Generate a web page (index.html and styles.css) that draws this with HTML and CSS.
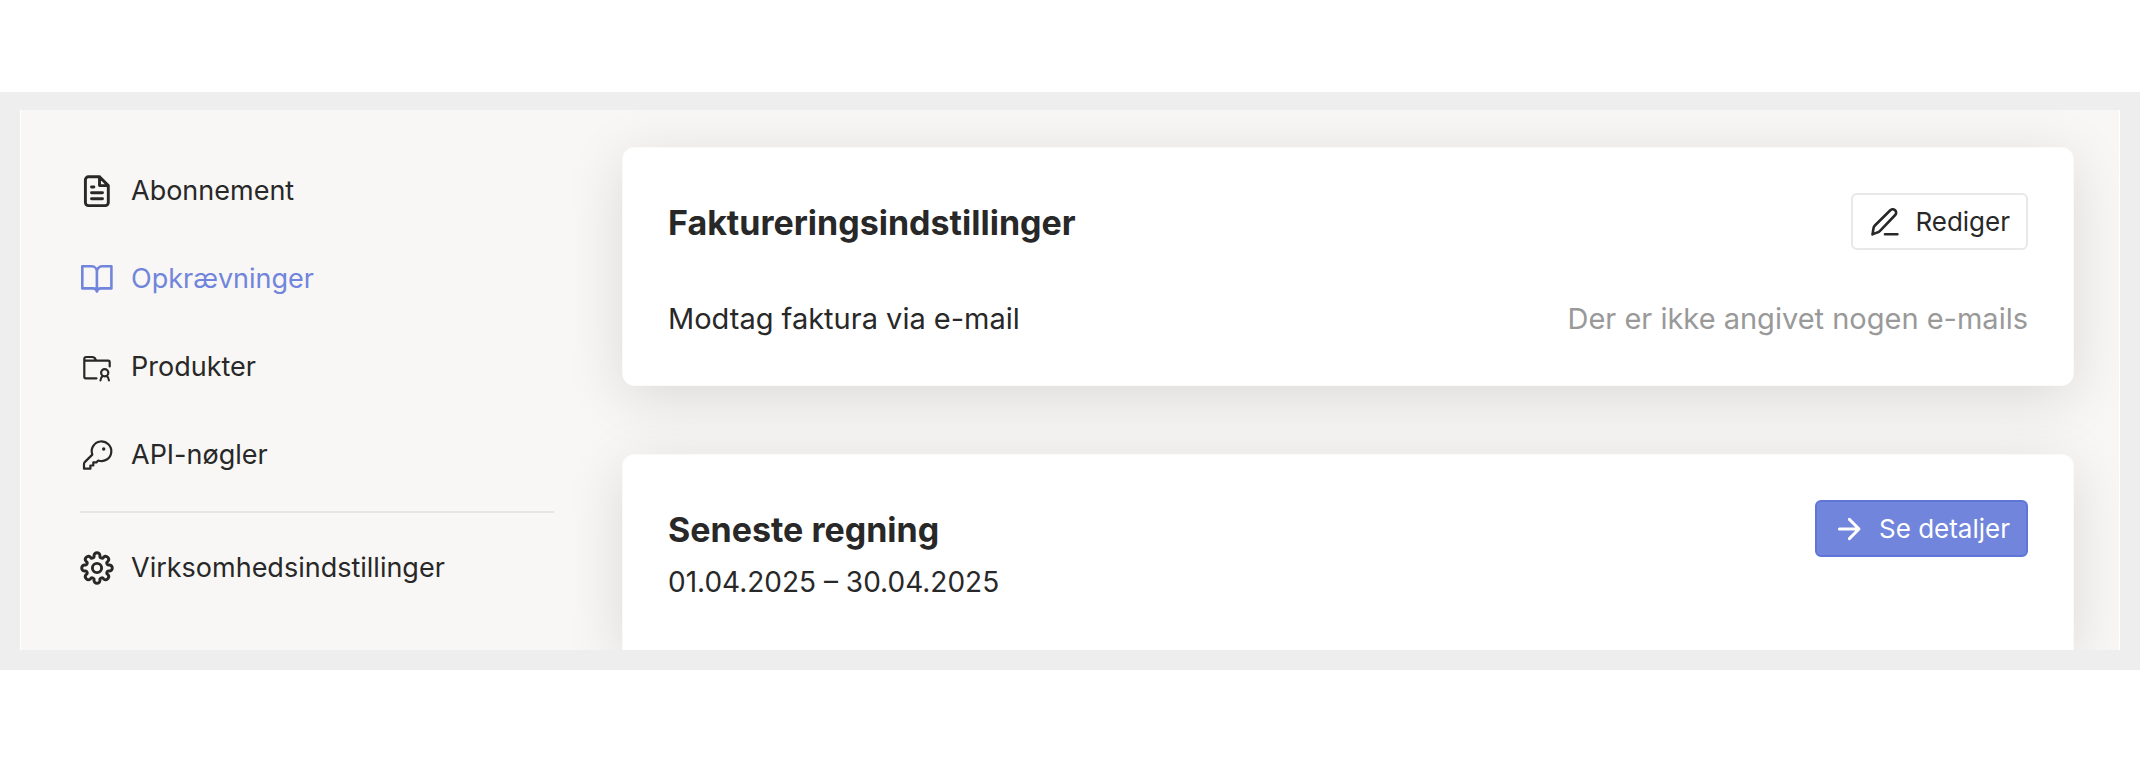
FILE: index.html
```
<!DOCTYPE html>
<html lang="da">

<head>
    <meta charset="UTF-8">
    <meta name="viewport" content="width=device-width, initial-scale=1.0">
    <title>Opkrævninger</title>
    <link rel="stylesheet" href="styles.css">
</head>

<body>
    <div class="frame">
        <div class="panel">
            <nav class="sidebar">
                <ul class="menu">
                    <li>
                        <a class="menu-link" href="#abonnement">
                            <svg class="icon bold" viewBox="0 0 34 34" aria-hidden="true">
                                <path d="M19.5 2.8H8.4a3 3 0 0 0-3 3v22.8a3 3 0 0 0 3 3h16.9a3 3 0 0 0 3-3V11.6zM19.5 2.8v8.8h8.8M11.5 13h2.4M11.5 18.7h11M11.5 24.7h11" />
                            </svg>
                            Abonnement
                        </a>
                    </li>
                    <li>
                        <a class="menu-link active" href="#opkraevninger" aria-current="page">
                            <svg class="icon" viewBox="0 0 34 34" aria-hidden="true">
                                <path d="M16.9 9.5a5.2 5.2 0 0 0-5.2-5.2H2.3v22.1h10.6a4 4 0 0 1 4 3.2a4 4 0 0 1 4-3.2h10.5V4.3h-9.3a5.2 5.2 0 0 0-5.2 5.2zV29" />
                            </svg>
                            Opkrævninger
                        </a>
                    </li>
                    <li>
                        <a class="menu-link" href="#produkter">
                            <svg class="icon thin" viewBox="0 0 34 34" aria-hidden="true">
                                <path d="M16.5 28.3H5.8a1.5 1.5 0 0 1-1.5-1.5V9a2 2 0 0 1 2-2h5.8a3.6 3.6 0 0 1 3.4 2.2l.7 1.5h12a1.5 1.5 0 0 1 1.5 1.5v4.2M4.3 10.7h12" />
                                <circle cx="24.7" cy="22.8" r="3.6" />
                                <path d="M22.6 26.2a5 5 0 0 0-2.1 4.2M26.8 26.2a5 5 0 0 1 2.1 4.2" />
                            </svg>
                            Produkter
                        </a>
                    </li>
                    <li>
                        <a class="menu-link" href="#api">
                            <svg class="icon thin" viewBox="0 0 34 34" aria-hidden="true">
                                <path d="M12.3 16.6L5 23.9a3 3 0 0 0-1 2.1v4.7h6.4v-3.2h2.9v-3.1h3.1l1.9-1.9a9.8 9.8 0 1 0-6-5.9z" />
                                <circle class="dot" cx="23.7" cy="11" r="1.7" />
                            </svg>
                            API-nøgler
                        </a>
                    </li>
                </ul>
                <hr class="divider">
                <a class="menu-link" href="#virksomhed">
                    <svg class="icon bold" viewBox="-17 -17 34 34" aria-hidden="true">
                        <path d="M-3-12.3A3 3 0 0 1 3-12.3A1.95 1.95 0 0 0 6.58-10.82A3 3 0 0 1 10.82-6.58A1.95 1.95 0 0 0 12.3-3A3 3 0 0 1 12.3 3A1.95 1.95 0 0 0 10.82 6.58A3 3 0 0 1 6.58 10.82A1.95 1.95 0 0 0 3 12.3A3 3 0 0 1-3 12.3A1.95 1.95 0 0 0-6.58 10.82A3 3 0 0 1-10.82 6.58A1.95 1.95 0 0 0-12.3 3A3 3 0 0 1-12.3-3A1.95 1.95 0 0 0-10.82-6.58A3 3 0 0 1-6.58-10.82A1.95 1.95 0 0 0-3-12.3z" />
                        <circle cx="0" cy="0" r="4.6" />
                    </svg>
                    Virksomhedsindstillinger
                </a>
            </nav>

            <main class="content">
                <section class="card">
                    <div class="card-header">
                        <h2>Faktureringsindstillinger</h2>
                        <button type="button" class="btn">
                            <svg class="btn-icon" viewBox="0 0 28 28" aria-hidden="true">
                                <path d="M1.5 26.4l1-6.2a5 5 0 0 1 1.4-2.7L19.3 2.3a3.3 3.3 0 0 1 4.9 4.7L9 22.9a5 5 0 0 1-2.6 1.5zM14 26.3h12.4" />
                            </svg>
                            Rediger
                        </button>
                    </div>
                    <div class="card-row">
                        <span>Modtag faktura via e-mail</span>
                        <span class="muted">Der er ikke angivet nogen e-mails</span>
                    </div>
                </section>

                <section class="card card-last">
                    <div class="card-header">
                        <div>
                            <h2>Seneste regning</h2>
                            <p class="period">01.04.2025 – 30.04.2025</p>
                        </div>
                        <button type="button" class="btn btn-primary">
                            <svg class="btn-icon" viewBox="0 0 28 28" aria-hidden="true">
                                <path d="M4.4 14h19.4M14.4 4.4L24 14l-9.6 9.6" />
                            </svg>
                            Se detaljer
                        </button>
                    </div>
                </section>
            </main>
        </div>
    </div>
</body>

</html>
```
FILE: styles.css
```
* {
    box-sizing: border-box;
}

body {
    margin: 0;
    padding: 92px 0 90px;
    background-color: #fff;
    color: #282828;
    font-family: Inter, "Liberation Sans", sans-serif;
    font-size: 28px;
}

.frame {
    padding: 18px 20px 20px;
    background-color: #eee;
}

.panel {
    display: grid;
    grid-template-columns: 474px 1fr;
    gap: 68px;
    padding: 37px 45px 0 59px;
    border: solid #fff;
    border-width: 0 1px;
    background-color: #f8f7f5;
    overflow: hidden;
}

/* Sidebar */
.sidebar {
    padding-top: 24px;
}

.menu {
    display: flex;
    flex-direction: column;
    gap: 48px;
    margin: 0;
    padding: 0;
    list-style: none;
}

.menu-link {
    display: flex;
    align-items: center;
    gap: 17px;
    color: #282828;
    font-size: 27px;
    line-height: 40px;
    text-decoration: none;
}

.menu-link.active {
    color: #7085db;
}

.divider {
    margin: 36px 0 35px;
    border: 0;
    border-top: 2px solid #e6e5e3;
}

.icon,
.btn-icon {
    flex: none;
    fill: none;
    stroke: currentColor;
    stroke-width: 2.6;
    stroke-linecap: round;
    stroke-linejoin: round;
}

.icon {
    width: 34px;
    height: 34px;
}

.icon.bold {
    stroke-width: 2.9;
}

.icon.thin {
    stroke-width: 2.2;
}

.icon .dot {
    fill: currentColor;
    stroke: none;
}

/* Cards */
.content {
    display: flex;
    flex-direction: column;
    gap: 68px;
}

.card {
    padding: 45px 45px 44px;
    border: 1px solid #fafafa;
    border-radius: 12px;
    background-color: #fff;
    box-shadow: 0 12px 60px rgba(0, 0, 0, 0.12);
}

.card-last {
    padding-bottom: 46px;
    border-bottom: 0;
    border-radius: 12px 12px 0 0;
}

.card-header,
.card-row {
    display: flex;
    justify-content: space-between;
    align-items: flex-start;
}

.card-row {
    margin-top: 44px;
    font-size: 29px;
    line-height: 44px;
}

h2 {
    margin: 0;
    font-size: 34px;
    font-weight: 700;
    line-height: 60px;
}

.period {
    margin: 0;
    line-height: 44px;
}

.muted {
    color: #999;
}

.btn {
    display: flex;
    align-items: center;
    gap: 16px;
    height: 57px;
    padding: 0 16px 0 18px;
    border: 2px solid #e8e8e8;
    border-radius: 6px;
    background-color: #fff;
    color: #282828;
    font-family: inherit;
    font-size: 26px;
    cursor: pointer;
}

.btn-icon {
    width: 28px;
    height: 28px;
}

.btn-primary {
    border-color: #5f75d8;
    background-color: #7085db;
    color: #fff;
}

.btn-primary .btn-icon {
    stroke-width: 3;
}
```
